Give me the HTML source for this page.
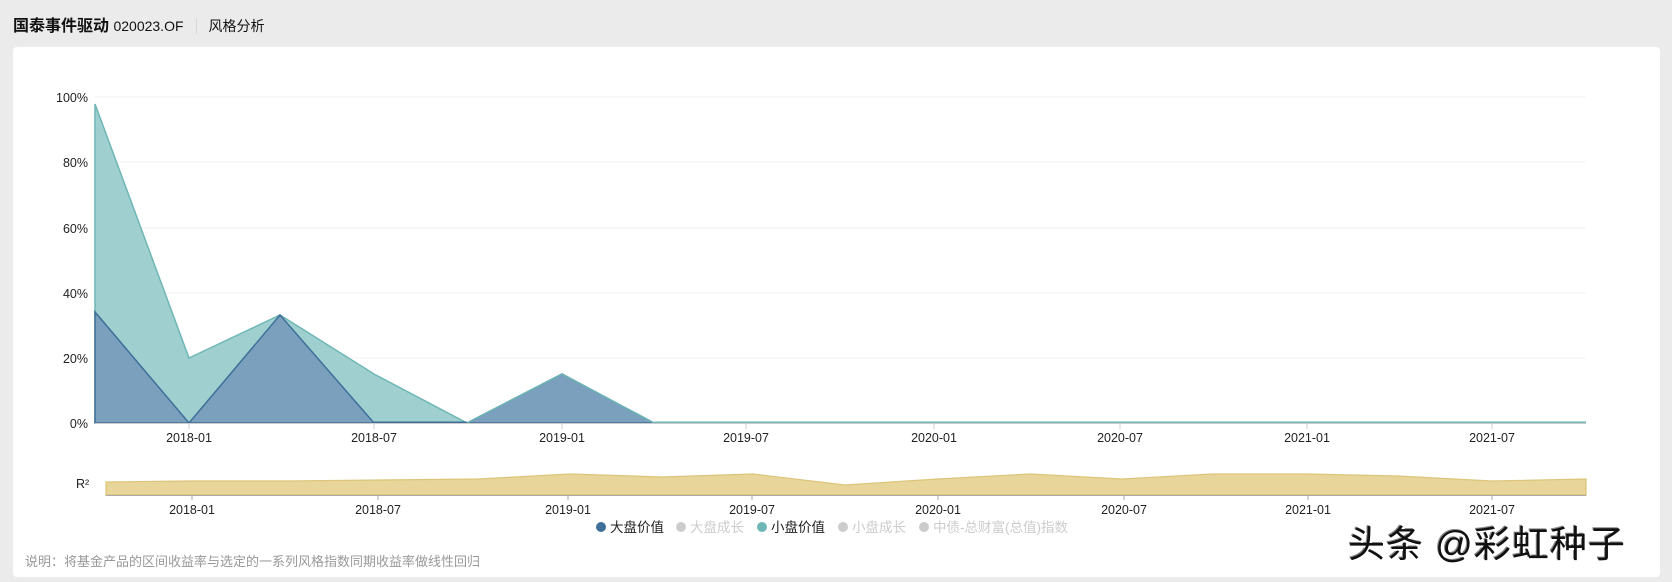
<!DOCTYPE html>
<html><head><meta charset="utf-8"><style>
body{margin:0;width:1672px;height:582px;background:#ebebeb;font-family:"Liberation Sans","Noto Sans CJK SC",sans-serif;overflow:hidden;position:relative}
.t{position:absolute;left:13px;top:12px;font-size:16px;color:#111;white-space:nowrap}
.t b{font-weight:bold}
.t .c{font-size:14px}
.t .s{display:inline-block;width:1px;height:16px;background:#d8d8d8;margin:0 12px;vertical-align:-3px}
.card{position:absolute;left:13px;top:47px;width:1647px;height:530px;background:#fff;border-radius:4px}
svg{position:absolute;left:0;top:0}
.n{position:absolute;left:25px;top:551px;font-size:13px;color:#999}
.w{position:absolute;left:1348px;top:514px;font-size:37px;color:#111;text-shadow:2px 2px 0 #fff,-1px -1px 0 #888;letter-spacing:1px}
</style></head><body>
<div class="t"><b>国泰事件驱动</b> <span class="c">020023.OF</span><span class="s"></span><span class="c">风格分析</span></div>
<div class="card"></div>
<svg width="1672" height="582" font-family="Liberation Sans,Noto Sans CJK SC,sans-serif" font-size="12.5">
<g stroke="#f0f0f0"><line x1="95" x2="1586" y1="97" y2="97"/><line x1="95" x2="1586" y1="162" y2="162"/><line x1="95" x2="1586" y1="228" y2="228"/><line x1="95" x2="1586" y1="293" y2="293"/><line x1="95" x2="1586" y1="358" y2="358"/></g>
<g fill="#222" text-anchor="end"><text x="88" y="102">100%</text><text x="88" y="167">80%</text><text x="88" y="233">60%</text><text x="88" y="298">40%</text><text x="88" y="363">20%</text><text x="88" y="428">0%</text></g>
<polygon points="95,104 189,358 280,315 374,374 467,423 562,374 654,423 95,423" fill="#a0cfd0" stroke="#6fb7b6" stroke-width="1.5"/>
<polygon points="95,312 189,423 280,315 374,423 467,423 562,374 654,423 95,423" fill="#7aa0bd" stroke="#3e6f99" stroke-width="1.5"/>
<line x1="467" y1="423" x2="562" y2="374" stroke="#6fb7b6" stroke-width="1.5"/><line x1="562" y1="374" x2="654" y2="423" stroke="#6fb7b6" stroke-width="1.5"/>
<line x1="654" x2="1586" y1="422.5" y2="422.5" stroke="#6fb7b6" stroke-width="2"/>
<line x1="374" x2="467" y1="422.5" y2="422.5" stroke="#3e6f99" stroke-width="2"/>
<line x1="95" x2="1586" y1="423.5" y2="423.5" stroke="#ccc"/>
<g stroke="#ccc"><line x1="189" x2="189" y1="424" y2="429"/><line x1="374" x2="374" y1="424" y2="429"/><line x1="562" x2="562" y1="424" y2="429"/><line x1="746" x2="746" y1="424" y2="429"/><line x1="934" x2="934" y1="424" y2="429"/><line x1="1120" x2="1120" y1="424" y2="429"/><line x1="1307" x2="1307" y1="424" y2="429"/><line x1="1492" x2="1492" y1="424" y2="429"/></g>
<g fill="#222" text-anchor="middle"><text x="189" y="442">2018-01</text><text x="374" y="442">2018-07</text><text x="562" y="442">2019-01</text><text x="746" y="442">2019-07</text><text x="934" y="442">2020-01</text><text x="1120" y="442">2020-07</text><text x="1307" y="442">2021-01</text><text x="1492" y="442">2021-07</text></g>
<text x="76" y="488" fill="#222">R²</text>
<polygon points="106,482 189,481 290,481 380,480 478,479 570,474 662,477 753,474 845,485 938,479 1030,474 1122,479 1212,474 1307,474 1398,476 1492,481 1586,479 1586,495 106,495" fill="#e8d59a" stroke="#dcc57a" stroke-width="1.2"/>
<line x1="106" x2="1586" y1="495.5" y2="495.5" stroke="#aaa"/>
<g stroke="#aaa"><line x1="192" x2="192" y1="496" y2="500"/><line x1="378" x2="378" y1="496" y2="500"/><line x1="568" x2="568" y1="496" y2="500"/><line x1="752" x2="752" y1="496" y2="500"/><line x1="938" x2="938" y1="496" y2="500"/><line x1="1124" x2="1124" y1="496" y2="500"/><line x1="1308" x2="1308" y1="496" y2="500"/><line x1="1492" x2="1492" y1="496" y2="500"/></g>
<g fill="#222" text-anchor="middle"><text x="192" y="514">2018-01</text><text x="378" y="514">2018-07</text><text x="568" y="514">2019-01</text><text x="752" y="514">2019-07</text><text x="938" y="514">2020-01</text><text x="1124" y="514">2020-07</text><text x="1308" y="514">2021-01</text><text x="1492" y="514">2021-07</text></g>
<g font-size="13.5"><circle cx="601" cy="527" r="5" fill="#3e6f99"/><text x="610" y="532" fill="#222">大盘价值</text>
<circle cx="681" cy="527" r="5" fill="#ccc"/><text x="690" y="532" fill="#ccc">大盘成长</text>
<circle cx="762" cy="527" r="5" fill="#6fb7b6"/><text x="771" y="532" fill="#222">小盘价值</text>
<circle cx="843" cy="527" r="5" fill="#ccc"/><text x="852" y="532" fill="#ccc">小盘成长</text>
<circle cx="924" cy="527" r="5" fill="#ccc"/><text x="933" y="532" fill="#ccc">中债-总财富(总值)指数</text></g>
</svg>
<div class="n">说明：将基金产品的区间收益率与选定的一系列风格指数同期收益率做线性回归</div>
<div class="w">头条 @彩虹种子</div>
</body></html>
